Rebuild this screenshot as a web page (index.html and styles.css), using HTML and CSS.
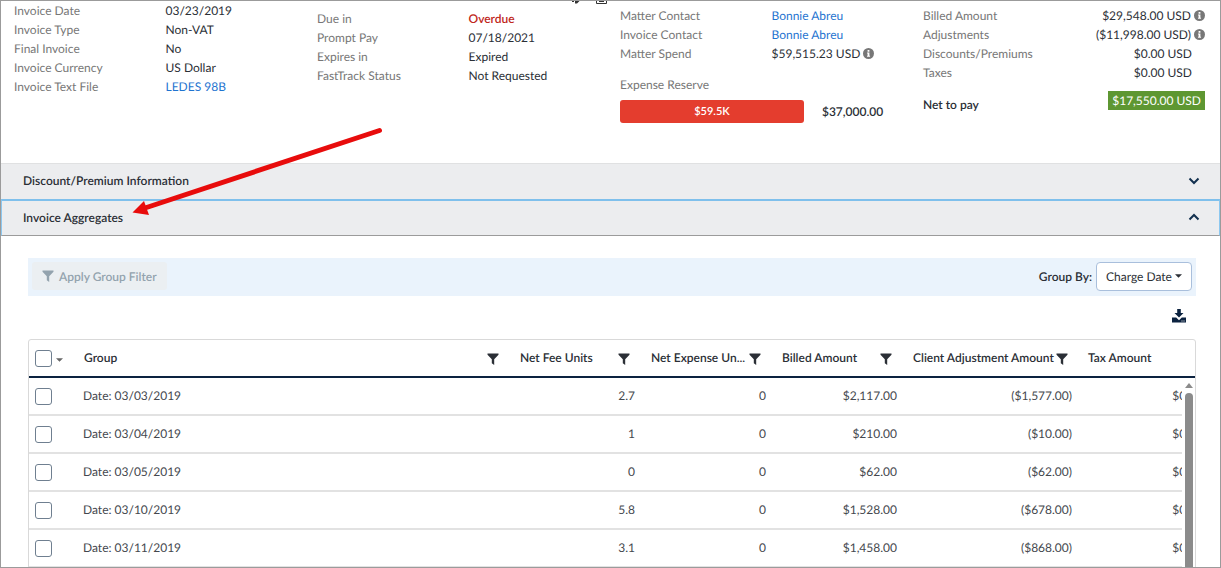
FILE: index.html
```html
<!DOCTYPE html>
<html lang="en">
<head>
    <meta charset="UTF-8">
    <meta name="viewport" content="width=device-width, initial-scale=1.0">
    <title>Invoice Summary</title>
    <link rel="stylesheet" href="styles.css">
</head>
<body>
    <!-- Shared icons -->
    <svg class="sprite" aria-hidden="true">
        <symbol id="icon-filter" viewBox="0 0 12 12">
            <path d="M0.500 0.500h11v1.3L7.2 6.2V12L4.800 10.2V6.2L0.500 1.8z"/>
        </symbol>
        <symbol id="icon-info" viewBox="0 0 12 12">
            <circle cx="6" cy="6" r="6"/>
            <path fill="#fff" d="M5 2.2h2v1.8H5zM4.4 4.9H7v3.5h.7v1.2H4.4V8.4H5V6.1h-.6z"/>
        </symbol>
        <symbol id="icon-caret" viewBox="0 0 8 4">
            <path d="M0 0h8L4 4z"/>
        </symbol>
    </svg>

    <div class="page">
        <!-- Invoice summary -->
        <section class="summary">
            <div class="summary-col">
                <dl class="fields">
                    <dt>Invoice Date</dt><dd>03/23/2019</dd>
                    <dt>Invoice Type</dt><dd>Non-VAT</dd>
                    <dt>Final Invoice</dt><dd>No</dd>
                    <dt>Invoice Currency</dt><dd>US Dollar</dd>
                    <dt>Invoice Text File</dt><dd><a href="#">LEDES 98B</a></dd>
                </dl>
            </div>

            <div class="summary-col">
                <div class="cut-icons">
                    <svg width="9" height="3" viewBox="0 0 9 3"><path fill="#333" d="M1 0h2v1H1zM4 0h4.500L6 2.500H4z"/></svg>
                    <svg width="11" height="3" viewBox="0 0 11 3"><path fill="none" stroke="#333" d="M.5 0v2.500h10V0M3 .5h5"/></svg>
                </div>
                <dl class="fields">
                    <dt>Due in</dt><dd class="overdue">Overdue</dd>
                    <dt>Prompt Pay</dt><dd>07/18/2021</dd>
                    <dt>Expires in</dt><dd>Expired</dd>
                    <dt>FastTrack Status</dt><dd>Not Requested</dd>
                </dl>
            </div>

            <div class="summary-col lowered">
                <dl class="fields">
                    <dt>Matter Contact</dt><dd><a href="#">Bonnie Abreu</a></dd>
                    <dt>Invoice Contact</dt><dd><a href="#">Bonnie Abreu</a></dd>
                    <dt>Matter Spend</dt>
                    <dd>$59,515.23 USD <svg class="info"><use href="#icon-info"/></svg></dd>
                </dl>
                <div class="reserve">
                    <div class="reserve-label">Expense Reserve</div>
                    <div class="reserve-row">
                        <div class="reserve-bar">$59.5K</div>
                        <strong>$37,000.00</strong>
                    </div>
                </div>
            </div>

            <div class="summary-col lowered">
                <dl class="fields amounts">
                    <dt>Billed Amount</dt>
                    <dd>$29,548.00 USD <svg class="info"><use href="#icon-info"/></svg></dd>
                    <dt>Adjustments</dt>
                    <dd>($11,998.00 USD) <svg class="info"><use href="#icon-info"/></svg></dd>
                    <dt>Discounts/Premiums</dt><dd class="no-info">$0.00 USD</dd>
                    <dt>Taxes</dt><dd class="no-info">$0.00 USD</dd>
                </dl>
                <div class="net">
                    <strong>Net to pay</strong>
                    <span class="net-amount">$17,550.00 USD</span>
                </div>
            </div>
        </section>

        <!-- Accordion -->
        <button type="button" class="panel-header" aria-expanded="false">
            Discount/Premium Information
            <svg class="chevron" viewBox="0 0 12 8"><path d="M1.500 1.500L6 6l4.500-4.500"/></svg>
        </button>
        <button type="button" class="panel-header open" aria-expanded="true">
            Invoice Aggregates
            <svg class="chevron" viewBox="0 0 12 8"><path d="M1.500 6.500L6 2l4.500 4.500"/></svg>
        </button>

        <section class="panel-body">
            <div class="toolbar">
                <button type="button" class="filter-button" disabled>
                    <svg class="filter"><use href="#icon-filter"/></svg>
                    Apply Group Filter
                </button>
                <div class="group-by">
                    <label for="groupBy">Group By:</label>
                    <div class="select-wrap">
                        <select id="groupBy">
                            <option>Charge Date</option>
                        </select>
                        <svg class="caret"><use href="#icon-caret"/></svg>
                    </div>
                </div>
            </div>

            <div class="export-row">
                <button type="button" class="icon-button" aria-label="Download">
                    <svg width="14" height="14" viewBox="0 0 14 14">
                        <path d="M5.200 0h3.600v4h2.700L7 8.600 2.500 4h2.700z"/>
                        <path d="M0 8.500h4.200L7 11.200 9.800 8.500H14v5H0z"/>
                        <path fill="#fff" d="M9.500 11.500h1v1h-1zM11.500 11.500h1v1h-1z"/>
                    </svg>
                </button>
            </div>

            <div class="grid">
                <table>
                    <colgroup>
                        <col class="col-check">
                        <col>
                        <col class="col-number">
                        <col class="col-number">
                        <col class="col-number">
                        <col class="col-adjustment">
                        <col class="col-number">
                    </colgroup>
                    <thead>
                        <tr>
                            <th>
                                <div class="check-all">
                                    <input type="checkbox" aria-label="Select all">
                                    <svg class="caret"><use href="#icon-caret"/></svg>
                                </div>
                            </th>
                            <th><div class="head"><span>Group</span><svg class="filter"><use href="#icon-filter"/></svg></div></th>
                            <th><div class="head"><span>Net Fee Units</span><svg class="filter"><use href="#icon-filter"/></svg></div></th>
                            <th><div class="head"><span>Net Expense Un...</span><svg class="filter"><use href="#icon-filter"/></svg></div></th>
                            <th><div class="head"><span>Billed Amount</span><svg class="filter"><use href="#icon-filter"/></svg></div></th>
                            <th><div class="head"><span>Client Adjustment Amount</span><svg class="filter"><use href="#icon-filter"/></svg></div></th>
                            <th><div class="head"><span>Tax Amount</span></div></th>
                        </tr>
                    </thead>
                    <tbody>
                        <tr>
                            <td><input type="checkbox" aria-label="Select 03/03/2019"></td>
                            <td>Date: 03/03/2019</td>
                            <td class="num">2.7</td>
                            <td class="num">0</td>
                            <td class="num">$2,117.00</td>
                            <td class="num">($1,577.00)</td>
                            <td class="num">$0.00</td>
                        </tr>
                        <tr>
                            <td><input type="checkbox" aria-label="Select 03/04/2019"></td>
                            <td>Date: 03/04/2019</td>
                            <td class="num">1</td>
                            <td class="num">0</td>
                            <td class="num">$210.00</td>
                            <td class="num">($10.00)</td>
                            <td class="num">$0.00</td>
                        </tr>
                        <tr>
                            <td><input type="checkbox" aria-label="Select 03/05/2019"></td>
                            <td>Date: 03/05/2019</td>
                            <td class="num">0</td>
                            <td class="num">0</td>
                            <td class="num">$62.00</td>
                            <td class="num">($62.00)</td>
                            <td class="num">$0.00</td>
                        </tr>
                        <tr>
                            <td><input type="checkbox" aria-label="Select 03/10/2019"></td>
                            <td>Date: 03/10/2019</td>
                            <td class="num">5.8</td>
                            <td class="num">0</td>
                            <td class="num">$1,528.00</td>
                            <td class="num">($678.00)</td>
                            <td class="num">$0.00</td>
                        </tr>
                        <tr>
                            <td><input type="checkbox" aria-label="Select 03/11/2019"></td>
                            <td>Date: 03/11/2019</td>
                            <td class="num">3.1</td>
                            <td class="num">0</td>
                            <td class="num">$1,458.00</td>
                            <td class="num">($868.00)</td>
                            <td class="num">$0.00</td>
                        </tr>
                    </tbody>
                </table>
                <div class="scrollbar">
                    <svg width="8" height="5" viewBox="0 0 8 5"><path d="M0 5L4 0l4 5z"/></svg>
                    <div class="thumb"></div>
                </div>
            </div>
        </section>

        <!-- Callout arrow -->
        <svg class="callout" width="252" height="90" viewBox="131 127 252 90" aria-hidden="true">
            <path d="M145 208L379.500 130.500"/>
            <polygon points="132.500,212.500 144,201 149,215"/>
        </svg>
    </div>
</body>
</html>
```
FILE: styles.css
```css
* {
    margin: 0;
    padding: 0;
    box-sizing: border-box;
}

body {
    font-family: Lato, 'Liberation Sans', sans-serif;
    font-size: 12px;
    line-height: 19px;
    color: #2b2f36;
    background-color: #fff;
    text-rendering: geometricPrecision;
}

button,
select {
    font-family: inherit;
    font-size: inherit;
    color: inherit;
    text-rendering: inherit;
}

a {
    color: #1f74d0;
    text-decoration: none;
}

strong,
th,
label {
    font-weight: 600;
}

.sprite {
    position: absolute;
    width: 0;
    height: 0;
}

.page {
    position: relative;
    height: 100vh;
    border: 1px solid #9b9b9b;
    overflow: hidden;
}

/* Summary */
.summary {
    display: grid;
    grid-template-columns: repeat(4, 1fr);
    min-height: 162px;
    padding: 0 4px 0 3px;
}

.lowered {
    padding-top: 5px;
}

.fields {
    display: grid;
    grid-template-columns: 1fr 1fr;
}

.fields dt,
.fields dd {
    padding-left: 10px;
}

.fields dt,
.reserve-label {
    color: #777;
}

.fields .overdue {
    color: #c0271c;
    font-weight: 600;
}

.cut-icons {
    display: flex;
    gap: 16px;
    height: 8px;
    padding-left: 264px;
}

.info {
    width: 11px;
    height: 11px;
    fill: #777;
    vertical-align: -1px;
}

.amounts dd {
    text-align: right;
    padding-right: 11px;
}

.amounts .no-info {
    padding-right: 24px;
}

.reserve {
    padding: 12px 10px 0;
}

.reserve-row {
    display: flex;
    align-items: center;
    gap: 18px;
    margin-top: 6px;
}

.reserve-bar {
    width: 65%;
    line-height: 23px;
    border-radius: 3px;
    background-color: #e43d2e;
    color: #fff;
    font-size: 11px;
    font-weight: 600;
    text-align: center;
}

.net {
    display: flex;
    justify-content: space-between;
    align-items: flex-end;
    padding: 9px 11px 0 10px;
}

.net strong {
    line-height: 10px;
}

.net-amount {
    padding: 0 4px;
    background-color: #5e9732;
    color: #fff;
}

/* Accordion */
.panel-header {
    display: flex;
    justify-content: space-between;
    align-items: center;
    width: 100%;
    height: 36px;
    padding: 0 20px 2px 22px;
    border: none;
    border-top: 1px solid #e0e1e2;
    background-color: #ecedef;
    font-weight: 600;
    cursor: pointer;
}

.panel-header.open {
    height: 37px;
    padding: 0 19px 2px 21px;
    border: 1px solid #8cc8f0;
    border-top: 2px solid #7fc0ec;
    border-bottom-color: #9b9b9b;
}

.chevron {
    width: 12px;
    height: 8px;
    fill: none;
    stroke: #12304f;
    stroke-width: 2;
}

/* Aggregates */
.panel-body {
    padding: 22px 24px 0 27px;
}

.toolbar {
    display: flex;
    justify-content: space-between;
    align-items: center;
    height: 38px;
    padding: 0 4px 2px;
    background-color: #eaf3fc;
}

.filter {
    width: 12px;
    height: 12px;
    flex-shrink: 0;
    fill: #2b2f36;
}

.filter-button {
    display: flex;
    align-items: center;
    gap: 5px;
    height: 28px;
    padding: 0 10px;
    border: none;
    border-radius: 3px;
    background-color: #ebeff2;
    color: #93a3ae;
    font-weight: 600;
}

.filter-button .filter {
    fill: #93a3ae;
}

.group-by {
    display: flex;
    align-items: center;
    gap: 4px;
}

.select-wrap {
    position: relative;
}

.select-wrap select {
    height: 29px;
    padding: 0 19px 0 9px;
    border: 1px solid #a9bfdc;
    border-radius: 4px;
    background-color: #fff;
    appearance: none;
}

.caret {
    width: 7px;
    height: 4px;
    fill: #2b2f36;
}

.select-wrap .caret {
    position: absolute;
    top: 12px;
    right: 10px;
    pointer-events: none;
}

.export-row {
    display: flex;
    justify-content: flex-end;
    align-items: center;
    height: 43px;
    padding: 0 10px 4px;
}

.icon-button {
    border: none;
    background: none;
    line-height: 0;
    cursor: pointer;
}

.icon-button svg {
    fill: #0c2340;
}

.grid {
    position: relative;
    border: 1px solid #d9d9d9;
    border-radius: 3px 3px 0 0;
    overflow: hidden;
}

table {
    width: calc(100% + 16px);
    table-layout: fixed;
    border-collapse: separate;
    border-spacing: 0;
}

.col-check {
    width: 47px;
}

.col-number {
    width: 131px;
}

.col-adjustment {
    width: 175px;
}

th {
    height: 38px;
    padding: 0 13px 2px 8px;
    border-bottom: 2px solid #0c2340;
    text-align: left;
}

td {
    height: 38px;
    padding: 0 8px 2px 7px;
    border-bottom: 2px solid #e2e2e2;
    color: #44484e;
}

th:first-child,
td:first-child {
    padding: 0 6px;
}

.num {
    text-align: right;
}

.head {
    display: flex;
    justify-content: space-between;
    align-items: center;
    gap: 2px;
    white-space: nowrap;
}

.head .filter {
    margin-top: 3px;
}

.check-all {
    display: flex;
    align-items: center;
    gap: 4px;
}

.check-all .caret {
    margin-top: 4px;
    fill: #666;
}

input[type="checkbox"] {
    display: block;
    width: 17px;
    height: 17px;
    border: 1px solid #6f7f90;
    border-radius: 3px;
    background-color: #fff;
    appearance: none;
}

.scrollbar {
    display: flex;
    flex-direction: column;
    align-items: center;
    gap: 5px;
    position: absolute;
    top: 38px;
    right: 0;
    bottom: 0;
    width: 13px;
    padding-top: 5px;
    background-color: #fff;
    fill: #8b8b8b;
}

.thumb {
    flex: 1;
    width: 8px;
    border-radius: 4px 4px 0 0;
    background-color: #8b8b8b;
}

.callout {
    position: absolute;
    top: 126px;
    left: 130px;
    fill: #e80c0c;
    pointer-events: none;
}

.callout path {
    stroke: #e80c0c;
    stroke-width: 5;
    stroke-linecap: round;
}
```
